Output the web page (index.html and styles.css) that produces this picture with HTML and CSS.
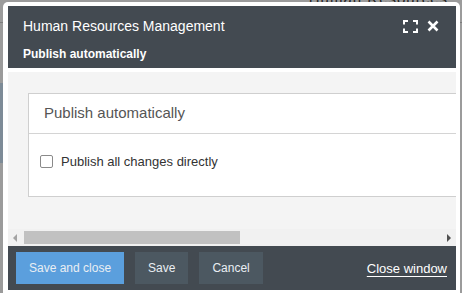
FILE: index.html
```html
<!DOCTYPE html>
<html lang="en">
<head>
    <meta charset="UTF-8">
    <title>Publish automatically</title>
    <link rel="stylesheet" href="styles.css">
</head>
<body>
    <div class="page">
        <div class="page-top"><span class="page-title">Human Resources</span></div>
        <div class="page-side"></div>
    </div>

    <div class="modal">
        <div class="modal-header">
            <div class="title-row">
                <span class="title">Human Resources Management</span>
                <span class="tools">
                    <svg class="icon" width="15" height="13" viewBox="0 0 15 13">
                        <path d="M1 4.5V1h4M10 1h4v3.5M14 8.5V12h-4M5 12H1V8.5" fill="none" stroke="#fff" stroke-width="2"/>
                    </svg>
                    <svg class="icon" width="12" height="12" viewBox="0 0 12 12">
                        <path d="M1.5 1.5l9 9M10.5 1.5l-9 9" fill="none" stroke="#fff" stroke-width="2.6"/>
                    </svg>
                </span>
            </div>
            <div class="subtitle">Publish automatically</div>
        </div>

        <div class="modal-body">
            <div class="card">
                <div class="card-title">Publish automatically</div>
                <div class="card-body">
                    <label class="check"><span class="checkbox"></span>Publish all changes directly</label>
                </div>
            </div>
        </div>

        <div class="hscroll">
            <span class="arrow arrow-left"></span>
            <div class="track"><div class="thumb"></div></div>
            <span class="arrow arrow-right"></span>
        </div>

        <div class="modal-footer">
            <button class="button button-primary">Save and close</button>
            <button class="button">Save</button>
            <button class="button">Cancel</button>
            <a href="#" class="close-link">Close window</a>
        </div>
    </div>
</body>
</html>
```

FILE: styles.css
```css
/* Global */
body {
    margin: 0;
    font-family: 'Liberation Sans', Arial, sans-serif;
    background-color: #9b9b9b;
    height: 293px;
    overflow: hidden;
}

/* Page behind the dialog */
.page-top {
    height: 22px;
    border-bottom: 1px solid #7c7c7c;
    display: flex;
    justify-content: flex-end;
    padding-right: 14px;
}

.page-title {
    font-size: 15px;
    color: #222;
    margin-top: -10px;
    letter-spacing: 1px;
}

.page-side {
    margin-top: 60px;
    width: 8px;
    height: 80px;
    background-color: #7d8b97;
}

/* Dialog */
.modal {
    position: absolute;
    left: 3px;
    top: 2px;
    width: 448px;
    height: 288px;
    padding: 4px 4px 0 5px;
    background-color: #fff;
    border-radius: 5px 5px 0 0;
    display: flex;
    flex-direction: column;
}

.modal-header {
    background-color: #434a51;
    color: #fff;
    padding: 12px 17px 7px 15px;
}

.title-row {
    display: flex;
    justify-content: space-between;
    align-items: center;
}

.title {
    font-size: 14px;
    line-height: 16px;
}

.tools {
    display: flex;
    align-items: center;
    gap: 9px;
}

.icon {
    display: block;
}

.subtitle {
    margin-top: 13px;
    font-size: 12px;
    font-weight: bold;
    line-height: 14px;
}

.modal-body {
    margin-top: 4px;
    background-color: #f4f4f4;
    height: 157px;
    padding: 21px 0 0 20px;
    box-sizing: border-box;
    overflow: hidden;
}

.card {
    width: 520px;
    background-color: #fff;
    border: 1px solid #cfcfcf;
}

.card-title {
    font-size: 15px;
    line-height: 17px;
    color: #555;
    padding: 10px 15px 12px;
    border-bottom: 1px solid #d4d4d4;
}

.card-body {
    padding: 20px 11px 27px;
}

.check {
    display: flex;
    align-items: center;
    gap: 8px;
    font-size: 13px;
    line-height: 15px;
    color: #333;
}

.checkbox {
    width: 11px;
    height: 11px;
    border: 1px solid #8a8a8a;
    border-radius: 2px;
    background-color: #fff;
}

/* Horizontal scrollbar */
.hscroll {
    height: 17px;
    background-color: #f1f1f1;
    display: flex;
    align-items: center;
}

.arrow {
    width: 0;
    height: 0;
    border-top: 4px solid transparent;
    border-bottom: 4px solid transparent;
}

.arrow-left {
    margin: 0 7px 0 5px;
    border-right: 4px solid #a3a3a3;
}

.arrow-right {
    margin: 0 5px 0 6px;
    border-left: 4px solid #505050;
}

.track {
    flex: 1;
}

.thumb {
    width: 216px;
    height: 13px;
    background-color: #c1c1c1;
}

/* Footer */
.modal-footer {
    background-color: #434a51;
    height: 44px;
    padding: 6px 9px 6px 8px;
    box-sizing: border-box;
    display: flex;
    align-items: stretch;
    gap: 11px;
}

.button {
    font-family: inherit;
    font-size: 12px;
    padding: 0 13px;
    color: #e9eef3;
    background-color: #4c5861;
    border: none;
    cursor: pointer;
}

.button-primary {
    background-color: #5b9fdd;
}

.close-link {
    margin-left: auto;
    align-self: center;
    color: #fff;
    font-size: 13px;
    text-decoration: underline;
    text-underline-offset: 3px;
}
```
